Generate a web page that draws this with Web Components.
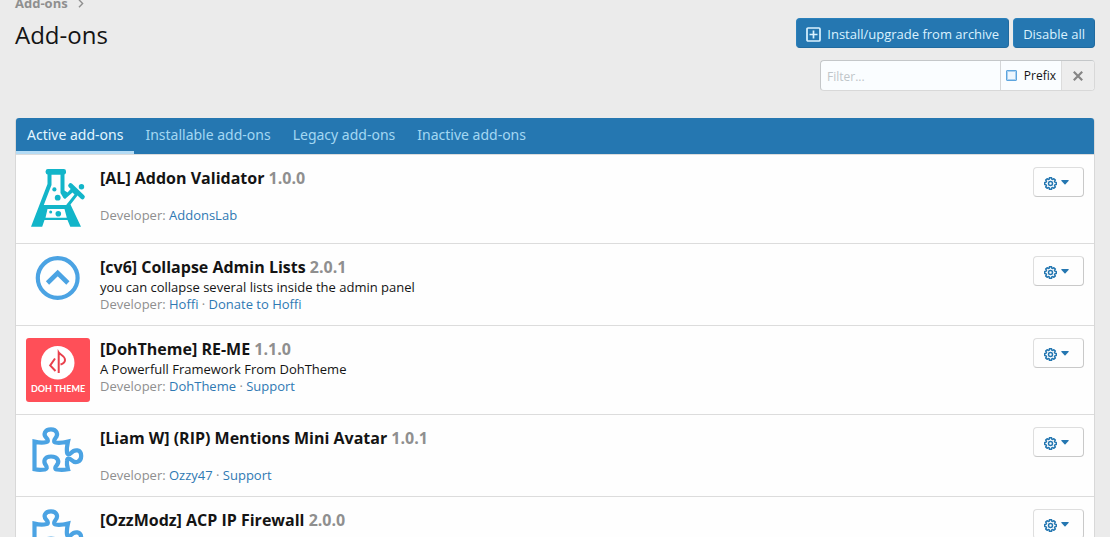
<!DOCTYPE html>
<html lang="en">
<head>
<meta charset="utf-8">
<title>Add-ons</title>
<style>
  body { margin: 0; background: #ebebeb; color: #141414; font: 13px/18px "Open Sans", "Noto Sans", sans-serif; }
</style>
</head>
<body>
<admin-page>
  <page-header slot="header" heading="Add-ons">
    <a slot="crumb" href="#addons">Add-ons</a>
    <action-button slot="actions" icon>Install/upgrade from archive</action-button>
    <action-button slot="actions">Disable all</action-button>
    <quick-filter slot="filter"></quick-filter>
  </page-header>
  <tab-panel>
    <tab-link slot="tabs" active>Active add-ons</tab-link>
    <tab-link slot="tabs">Installable add-ons</tab-link>
    <tab-link slot="tabs">Legacy add-ons</tab-link>
    <tab-link slot="tabs">Inactive add-ons</tab-link>
    <addon-row icon="flask" name="[AL] Addon Validator" version="1.0.0" developer="AddonsLab"></addon-row>
    <addon-row icon="chevron" name="[cv6] Collapse Admin Lists" version="2.0.1" developer="Hoffi" extra="Donate to Hoffi">you can collapse several lists inside the admin panel</addon-row>
    <addon-row icon="doh" name="[DohTheme] RE-ME" version="1.1.0" developer="DohTheme" extra="Support">A Powerfull Framework From DohTheme</addon-row>
    <addon-row icon="puzzle" name="[Liam W] (RIP) Mentions Mini Avatar" version="1.0.1" developer="Ozzy47" extra="Support"></addon-row>
    <addon-row icon="puzzle" name="[OzzModz] ACP IP Firewall" version="2.0.0" developer="Ozzy47" extra="Support"></addon-row>
  </tab-panel>
</admin-page>

<script>
const define = (tag, render) => customElements.define(tag, class extends HTMLElement {
  constructor() { super(); this.attachShadow({ mode: 'open' }); }
  connectedCallback() { this.shadowRoot.innerHTML = render(this); }
});

define('admin-page', () => `
  <style>
    :host { display: block; height: 100vh; overflow: hidden; }
    main { padding: 0 15px; }
  </style>
  <slot name="header"></slot>
  <main><slot></slot></main>`);

define('page-header', el => `
  <style>
    :host { display: block; padding: 0 15px 27px; }
    nav { display: flex; align-items: center; gap: 10px; margin-top: -6px; line-height: 18px; font-weight: 700; }
    ::slotted(a) { color: #8f8f8f; text-decoration: none; }
    .top { display: flex; justify-content: space-between; align-items: flex-start; padding-top: 6px; }
    h1 { margin: 0; font-size: 24px; line-height: 34px; font-weight: 400; }
    .side { display: flex; flex-direction: column; align-items: flex-end; gap: 12px; }
    .actions { display: flex; gap: 4px; }
  </style>
  <nav aria-label="Breadcrumb"><slot name="crumb"></slot>
    <svg width="6" height="9" viewBox="0 0 6 9" fill="none" stroke="#8f8f8f" stroke-width="1.4"><path d="M1 .8 4.6 4.5 1 8.2"/></svg>
  </nav>
  <div class="top">
    <h1>${el.getAttribute('heading')}</h1>
    <div class="side">
      <div class="actions"><slot name="actions"></slot></div>
      <slot name="filter"></slot>
    </div>
  </div>`);

define('action-button', el => `
  <style>
    :host { display: block; }
    button { display: flex; align-items: center; gap: 6px; height: 30px; padding: 2px 9px 0; border: 1px solid; border-color: #2a80bb #206a9f #206a9f #2a80bb; border-radius: 4px; background: #2577b1; color: #daf2ff; font: inherit; white-space: nowrap; }
  </style>
  <button type="button">${el.hasAttribute('icon') ? `<svg width="15" height="15" viewBox="0 0 15 15" fill="none" stroke="currentColor" stroke-width="1.7"><rect x="1" y="1" width="13" height="13" rx="1"/><path d="M7.500 3.500v8M3.500 7.500h8"/></svg>` : ''}<slot></slot></button>`);

define('quick-filter', () => `
  <style>
    :host { display: flex; box-sizing: border-box; width: 275px; height: 31px; border: 1px solid; border-color: #c4c7c9 #d8d8d8 #d8d8d8 #c4c7c9; border-radius: 4px; overflow: hidden; background: #fafdff; }
    input[type=text] { flex: 1; min-width: 0; padding: 2px 6px 0; border: 0; background: none; font: 12px "Open Sans", sans-serif; outline: 0; }
    input::placeholder { color: #bfc5c9; opacity: 1; }
    label { display: flex; align-items: center; gap: 7px; padding: 0 5px; border-left: 1px solid #d4d6d8; font-size: 12px; }
    input[type=checkbox] { appearance: none; width: 11px; height: 11px; margin: 0; border: 1px solid #5da5de; border-radius: 1px; background: #eef7fe; box-shadow: 0 0 0 1px #a9d0f0 inset; }
    button { display: grid; place-items: center; width: 33px; padding: 0; border: 0; border-left: 1px solid #dcdcdc; background: #ededed; }
  </style>
  <input type="text" placeholder="Filter..." aria-label="Filter">
  <label><input type="checkbox">Prefix</label>
  <button type="button" aria-label="Clear filter"><svg width="10" height="10" viewBox="0 0 10 10" stroke="#858585" stroke-width="2.200"><path d="M.8.8l8.400 8.400M9.200.8.8 9.200"/></svg></button>`);

define('tab-panel', () => `
  <style>
    :host { display: block; border: 1px solid #d8d8d8; border-top: 0; border-radius: 4px; background: #fefefe; }
    nav { display: flex; height: 36px; border-radius: 3px 3px 0 0; background: #2577b1; overflow: hidden; }
  </style>
  <nav><slot name="tabs"></slot></nav>
  <slot></slot>`);

define('tab-link', () => `
  <style>
    :host { display: block; }
    a { display: block; padding: 0 11px; border-bottom: 3px solid transparent; color: #a3d7f3; font: 14px/33px "Noto Sans", sans-serif; text-decoration: none; white-space: nowrap; }
    :host([active]) a { color: #e3f6ff; border-color: #b5dcf5; }
  </style>
  <a href="#tab"><slot></slot></a>`);

const icons = {
  flask: `<g fill="#12b5c9"><rect x="19.700" y="2" width="20.300" height="5.500" rx="2.200"/>
    <path fill-rule="evenodd" d="M21.500 6h17v17.500l3 2 5.500-6 6.500 6.500-9 11.500L55 59.700H44.300L41.500 53h-23l-2.300 6.700H5L21.500 17zM25.500 7.500V18L17.800 38h22.400l8.300-10.500-2-2L39 32l-1.500-1-3-5V7.500zM21.500 42l-2 8.700h21.300L38.500 42z"/>
    <circle cx="28.400" cy="22.400" r="2.100"/><circle cx="31.700" cy="30.700" r="2.900"/><circle cx="32.300" cy="46.700" r="2.800"/><circle cx="24.700" cy="45" r="1.500"/><circle cx="55.500" cy="19.700" r="2.700"/></g>
    <path d="M44.500 18.500 56.500 30" stroke="#12b5c9" stroke-width="4.600" stroke-linecap="round"/>`,
  chevron: `<g fill="none" stroke="#4ba3e3"><circle cx="31.700" cy="22" r="19.900" stroke-width="4.200"/><path d="M21.500 27 31.700 17 41.900 27" stroke-width="4.600"/></g>`,
  doh: `<rect width="64" height="64" rx="3" fill="#ff4f58"/><circle cx="31.700" cy="24.700" r="16.800" fill="#fff"/>
    <g fill="none" stroke="#e9404c" stroke-width="2"><path d="M29 20.500 24.200 27.500 29.500 33"/><path d="M32.700 35V14.500c1.500 2.500 6.300 3 6.300 7.500 0 2.500-2 3.800-4.500 4.500"/></g>
    <text x="32" y="54" text-anchor="middle" font-family="Lato, sans-serif" font-weight="700" font-size="9" fill="#fff">DOH THEME</text>`,
  puzzle: `<path fill="none" stroke="#4ba3e3" stroke-width="4.200" d="M8.500 14.600C12 15.500 17 16 20.500 15c2-.5 1.500-2.500 0-4C17 7.500 18.500 2.300 25 2.300c6 0 7.500 5.200 4.500 8.700-1.500 2-2 4 0 4.500 3.500.7 8.500 0 12.500-1-.7 3-1.500 7.500-1 11 .5 2.500 2.500 2 4 .5 3.500-4 10.200-4 10.200 3 0 6.500-6.200 7.500-9.700 4-2-2-4.200-2-4.500.5-.5 3.500.3 6.500 1 8.800-4 .7-8 .7-11 .2-2.500-.5-2-2.500-.5-4 3.500-4 1.500-9-5.500-9s-8 5-5 9c1.500 2 1 3.500-1 4-4 .5-7 .5-10.500-.2z"/>`
};

/* Eight-toothed cog outline, centred on the origin */
const gear = (() => {
  const pts = [];
  for (let i = 0; i < 8; i++) {
    for (const [d, r] of [[-15, 4.6], [-10, 5.9], [10, 5.9], [15, 4.6]]) {
      const a = (i * 45 + d) * Math.PI / 180;
      pts.push((r * Math.sin(a)).toFixed(2) + ' ' + (-r * Math.cos(a)).toFixed(2));
    }
  }
  return 'M' + pts.join('L') + 'Z';
})();

define('gear-button', () => `
  <style>
    :host { display: block; }
    button { display: flex; align-items: center; justify-content: center; gap: 4px; width: 51px; height: 30px; padding: 2px 4px 0 0; border: 1px solid; border-color: #dedede #c9c9c9 #c9c9c9 #dedede; border-radius: 4px; background: #fefefe; }
    .caret { margin-bottom: 2px; }
  </style>
  <button type="button" aria-label="Options">
    <svg width="13" height="13" viewBox="-6.500 -6.500 13 13" fill="none" stroke="#2577b1" stroke-width="1.500" stroke-linejoin="round"><path d="${gear}"/><circle r="2"/></svg>
    <svg class="caret" width="8" height="5" viewBox="0 0 8 5" fill="#2577b1"><path d="M.5 0h7q.5.4 0 1L4.500 4.300q-.5.5-1 0L.5 1Q0 .4.500 0z"/></svg>
  </button>`);

define('addon-row', el => {
  const at = n => el.getAttribute(n);
  return `
  <style>
    :host { display: flex; align-items: flex-start; gap: 10px; padding: 12px 10px; border-top: 1px solid #dcdcdc; }
    .icon { display: flex; flex: none; width: 64px; }
    .icon svg { display: block; }
    .main { flex: 1; min-width: 0; }
    h2 { margin: 0; font-size: 16px; line-height: 22px; font-weight: 700; }
    h2 span { color: #8f8f8f; }
    .desc { min-height: 18px; }
    .dev { color: #8f8f8f; line-height: 17px; }
    a { color: #2f79b3; text-decoration: none; }
  </style>
  <div class="icon"><svg width="64" height="${{ flask: 64, doh: 64 }[at('icon')] || 48}" aria-hidden="true">${icons[at('icon')]}</svg></div>
  <div class="main">
    <h2>${at('name')} <span>${at('version')}</span></h2>
    <div class="desc"><slot></slot></div>
    <div class="dev">Developer: <a href="#developer">${at('developer')}</a>${at('extra') ? ` · <a href="#extra">${at('extra')}</a>` : ''}</div>
  </div>
  <gear-button></gear-button>`;
});
</script>
</body>
</html>
